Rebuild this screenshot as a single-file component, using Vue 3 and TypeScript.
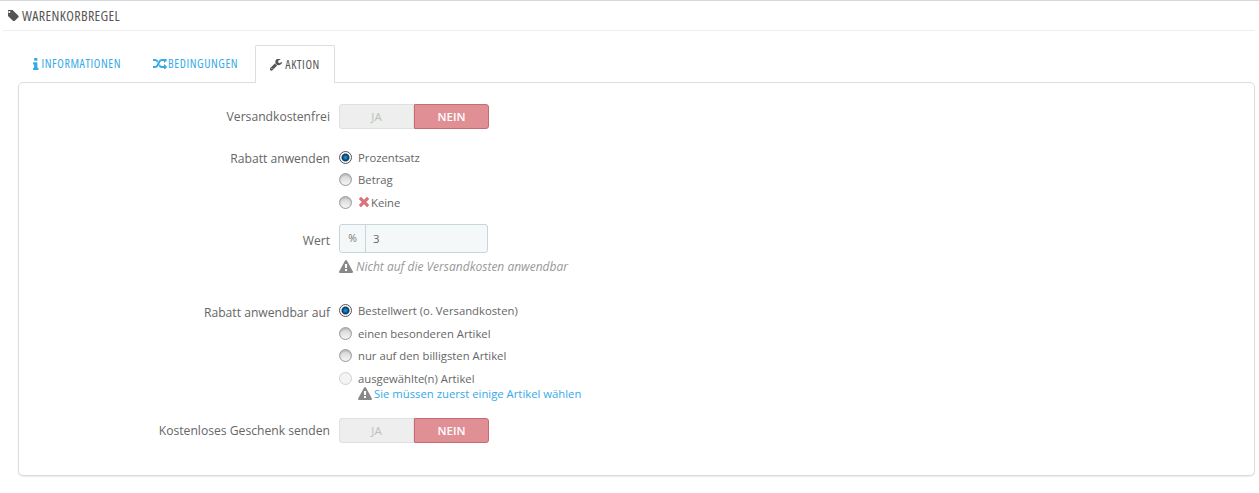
<script setup lang="ts">
import { ref } from 'vue';

const icons: Record<string, string> = {
  tag: 'M384 448q0-53-37.5-90.5t-90.5-37.5-90.5 37.5-37.5 90.5 37.5 90.5 90.5 37.5 90.5-37.5 37.5-90.5zm1067 576q0 53-37 90l-491 492q-39 37-91 37-53 0-90-37l-715-716q-38-37-64.5-101t-26.5-117v-416q0-52 38-90t90-38h416q53 0 117 26.5t102 64.5l715 714q37 39 37 91z',
  info: 'M1216 1344v128q0 26-19 45t-45 19h-512q-26 0-45-19t-19-45v-128q0-26 19-45t45-19h64v-384h-64q-26 0-45-19t-19-45v-128q0-26 19-45t45-19h384q26 0 45 19t19 45v576h64q26 0 45 19t19 45zm-128-1152v192q0 26-19 45t-45 19h-256q-26 0-45-19t-19-45v-192q0-26 19-45t45-19h256q26 0 45 19t19 45z',
  random: 'M666 481q-60 92-137 273-22-45-37-72.5t-40.5-63.5-51-56.5-63-35-81.5-14.5h-224q-14 0-23-9t-9-23v-192q0-14 9-23t23-9h224q250 0 410 225zm1126 799q0 14-9 23l-320 320q-9 9-23 9-13 0-22.5-9.5t-9.5-22.5v-192q-32 0-85 .5t-81 1-73-1-71-5-64-10.5-63-18.5-58-28.5-59-40-55-53.5-56-69.5q59-93 136-273 22 45 37 72.5t40.5 63.5 51 56.5 63 35 81.5 14.5h256v-192q0-14 9-23t23-9q12 0 24 10l319 319q9 9 9 23zm0-896q0 14-9 23l-320 320q-9 9-23 9-13 0-22.5-9.5t-9.5-22.5v-192h-256q-48 0-87 15t-69 45-51 61.5-45 77.5q-32 62-78 171-29 66-49.5 111t-54 105-64 100-74 83-90 68.5-106.5 42-128 16.5h-224q-14 0-23-9t-9-23v-192q0-14 9-23t23-9h224q48 0 87-15t69-45 51-61.5 45-77.5q32-62 78-171 29-66 49.5-111t54-105 64-100 74-83 90-68.5 106.5-42 128-16.5h256v-192q0-14 9-23t23-9q12 0 24 10l319 319q9 9 9 23z',
  wrench: 'M448 1472q0-26-19-45t-45-19-45 19-19 45 19 45 45 19 45-19 19-45zm644-420l-682 682q-37 37-90 37-52 0-91-37l-106-108q-38-36-38-90 0-53 38-91l681-681q39 98 114.5 173.5t173.5 114.5zm634-435q0 39-23 106-47 134-164.5 217.5t-258.5 83.5q-185 0-316.5-131.5t-131.5-316.5 131.5-316.5 316.5-131.5q58 0 121.5 16.5t107.5 46.5q16 11 16 28t-16 28l-293 169v224l193 107q5-3 79-48.5t135.5-81 70.5-35.5q15 0 23.5 10t8.5 25z',
  warning: 'M1024 1375v-190q0-14-9.5-23.5t-22.5-9.5h-192q-13 0-22.5 9.5t-9.5 23.5v190q0 14 9.5 23.5t22.5 9.5h192q13 0 22.5-9.5t9.5-23.5zm-2-374l18-459q0-12-10-19-13-11-24-11h-220q-11 0-24 11-10 7-10 21l17 457q0 10 10 16.5t24 6.5h185q14 0 23.5-6.5t10.5-16.5zm-14-934l768 1408q35 63-2 126-17 29-46.5 46t-63.5 17h-1536q-34 0-63.5-17t-46.5-46q-37-63-2-126l768-1408q17-31 47-49t65-18 65 18 47 49z',
  times: 'M1490 1322q0 40-28 68l-136 136q-28 28-68 28t-68-28l-294-294-294 294q-28 28-68 28t-68-28l-136-136q-28-28-28-68t28-68l294-294-294-294q-28-28-28-68t28-68l136-136q28-28 68-28t68 28l294 294 294-294q28-28 68-28t68 28l136 136q28 28 28 68t-28 68l-294 294 294 294q28 28 28 68z',
};

// cropped viewBoxes so each svg box hugs its glyph
const boxes: Record<string, string> = {
  tag: '128 192 1323 1408',
  info: '576 128 640 1408',
  random: '0 256 1792 1280',
  wrench: '128 192 1598 1600',
  warning: '0 0 1792 1664',
  times: '302 366 1188 1188',
};

const tabs = [
  { label: 'Informationen', icon: 'info' },
  { label: 'Bedingungen', icon: 'random' },
  { label: 'Aktion', icon: 'wrench' },
];
const activeTab = ref('Aktion');
const discountType = ref('Prozentsatz');
const applyTo = ref('Bestellwert (o. Versandkosten)');
const applyOptions = ['Bestellwert (o. Versandkosten)', 'einen besonderen Artikel', 'nur auf den billigsten Artikel', 'ausgewählte(n) Artikel'];
</script>

<template>
  <div class="page">
    <h1 class="title">
      <svg class="ico tag" :viewBox="boxes.tag"><path :d="icons.tag" /></svg>
      Warenkorbregel
    </h1>

    <div class="tabs">
      <a v-for="t in tabs" :key="t.label" class="tab" :class="[t.icon, { active: activeTab === t.label }]">
        <svg class="ico" :viewBox="boxes[t.icon]"><path :d="icons[t.icon]" /></svg>
        {{ t.label }}
      </a>
    </div>

    <div class="panel">
      <div class="row switch-row first">
        <label class="lbl">Versandkostenfrei</label>
        <div class="switch"><span class="yes">JA</span><span class="no">NEIN</span></div>
      </div>

      <div class="row radio-row discount">
        <label class="lbl">Rabatt anwenden</label>
        <div class="radios">
          <div class="radio-line"><span class="radio" :class="{ on: discountType === 'Prozentsatz' }"></span>Prozentsatz</div>
          <div class="radio-line"><span class="radio"></span>Betrag</div>
          <div class="radio-line">
            <span class="radio"></span>
            <svg class="ico red" :viewBox="boxes.times"><path :d="icons.times" /></svg>Keine
          </div>
        </div>
      </div>

      <div class="row value-row">
        <label class="lbl">Wert</label>
        <div>
          <div class="input-group"><span class="addon">%</span><span class="value">3</span></div>
          <p class="help">
            <svg class="ico grey" :viewBox="boxes.warning"><path :d="icons.warning" /></svg>
            <em>Nicht auf die Versandkosten anwendbar</em>
          </p>
        </div>
      </div>

      <div class="row radio-row apply">
        <label class="lbl">Rabatt anwendbar auf</label>
        <div class="radios">
          <div v-for="(o, i) in applyOptions" :key="o" class="radio-line">
            <span class="radio" :class="{ on: applyTo === o, faded: i === 3 }"></span>{{ o }}
          </div>
          <div class="hint">
            <svg class="ico grey" :viewBox="boxes.warning"><path :d="icons.warning" /></svg>
            Sie müssen zuerst einige Artikel wählen
          </div>
        </div>
      </div>

      <div class="row switch-row gift">
        <label class="lbl">Kostenloses Geschenk senden</label>
        <div class="switch"><span class="yes">JA</span><span class="no">NEIN</span></div>
      </div>
    </div>
  </div>
</template>

<style>
html, body { background: #fff; }
</style>

<style scoped>
.page {
  height: 493px;
  box-sizing: border-box;
  border-top: 1px solid #d3dadd;
  padding: 0 4px 0 3px;
  overflow: hidden;
  font-family: "Open Sans", sans-serif;
  font-size: 11.3px;
  color: #666;
}
.ico { height: 12px; fill: currentColor; flex: none; }
.title {
  display: flex;
  align-items: center;
  gap: 3px;
  height: 29px;
  margin: 0;
  padding-left: 5px;
  border-bottom: 1px solid #eee;
  font-family: "Open Sans", sans-serif;
  font-stretch: 75%;
  font-size: 14px;
  letter-spacing: 0.35px;
  font-weight: 400;
  color: #555;
  text-transform: uppercase;
}
.title .tag { height: 11px; width: 11px; }
.tabs {
  display: flex;
  gap: 2px;
  margin: 14px 0 0 15px;
  height: 37px;
}
.tab {
  display: flex;
  align-items: center;
  gap: 3px;
  padding: 0 15px;
  font-family: "Open Sans", sans-serif;
  font-stretch: 75%;
  font-size: 12px;
  letter-spacing: 0.6px;
  text-transform: uppercase;
  color: #36a9e8;
}
.tab.info .ico { width: 5.5px; height: 12px; }
.tab.random { gap: 1px; }
.tab.random .ico { width: 14px; height: 10px; }
.tab.wrench .ico { width: 12px; height: 12px; }
.tab.active {
  color: #555;
  background: #fff;
  border: 1px solid #ddd;
  border-bottom: none;
  border-radius: 2px 2px 0 0;
  position: relative;
  z-index: 1;
  height: 38px;
  padding: 0 14px;
  box-sizing: border-box;
}
.panel {
  margin-left: 15px;
  height: 394px;
  box-sizing: border-box;
  border: 1px solid #ddd;
  border-radius: 5px;
  box-shadow: 0 1px 1px rgba(0, 0, 0, 0.08);
  background: #fff;
}
.row { display: flex; align-items: flex-start; }
.lbl {
  width: 311px;
  flex: none;
  margin-right: 9px;
  text-align: right;
  font-size: 12.15px;
  color: #666;
}
.switch-row { align-items: center; }
.first { margin-top: 21px; }
.switch { display: flex; width: 150px; height: 25px; }
.switch span {
  flex: 1;
  display: flex;
  align-items: center;
  justify-content: center;
  box-sizing: border-box;
  font-size: 11.5px;
}
.yes {
  background: #eee;
  border: 1px solid #e0e0e0;
  border-radius: 3px 0 0 3px;
  color: #b8c4b8;
}
.no {
  background: #e08f95;
  border: 1px solid #c96a72;
  border-radius: 0 3px 3px 0;
  color: #fff;
  font-weight: 600;
}
.radio-row .lbl { padding-top: 4px; }
.discount { margin-top: 17px; }
.radio-line {
  display: flex;
  align-items: center;
  height: 22.5px;
}
.radio {
  width: 13px;
  height: 13px;
  flex: none;
  margin-right: 6px;
  border-radius: 50%;
  box-sizing: border-box;
  border: 1px solid #9c9c9c;
  background: linear-gradient(#d2d2d2, #f6f6f6);
  box-shadow: inset 0 1px 2px rgba(0, 0, 0, 0.2);
}
.radio.on {
  background: radial-gradient(circle at 50% 50%, #2a9ad2 0, #0a5a90 30%, #0b3658 44%, #fff 58%, #e4e4e4 100%);
  border-color: #555;
  box-shadow: none;
}
.radio.faded { border-color: #d0d0d0; background: #f4f4f4; box-shadow: none; }
.red { color: #d9727a; margin: 0 2px 0 1px; width: 10px; height: 10px; }
.grey { color: #888; width: 14px; height: 13px; margin-right: 3px; }
.value-row { margin-top: 10px; }
.value-row .lbl { padding-top: 8px; }
.input-group {
  display: flex;
  width: 149px;
  height: 29px;
  box-sizing: border-box;
  border: 1px solid #c7d6db;
  border-radius: 3px;
  background: #f5f8f9;
  line-height: 27px;
}
.addon { width: 25px; text-align: center; border-right: 1px solid #c7d6db; font-size: 10.5px; color: #777; }
.value { padding-left: 7px; color: #666; }
.help {
  display: flex;
  align-items: center;
  margin: 5px 0 0;
  font-size: 12px;
  color: #999;
}
.apply { margin-top: 25px; }
.hint { display: flex; align-items: center; height: 14px; color: #36a9e8; margin-top: -3px; padding-left: 19px; }
.hint .grey { margin-right: 2px; }
.gift { margin-top: 17px; }
</style>
